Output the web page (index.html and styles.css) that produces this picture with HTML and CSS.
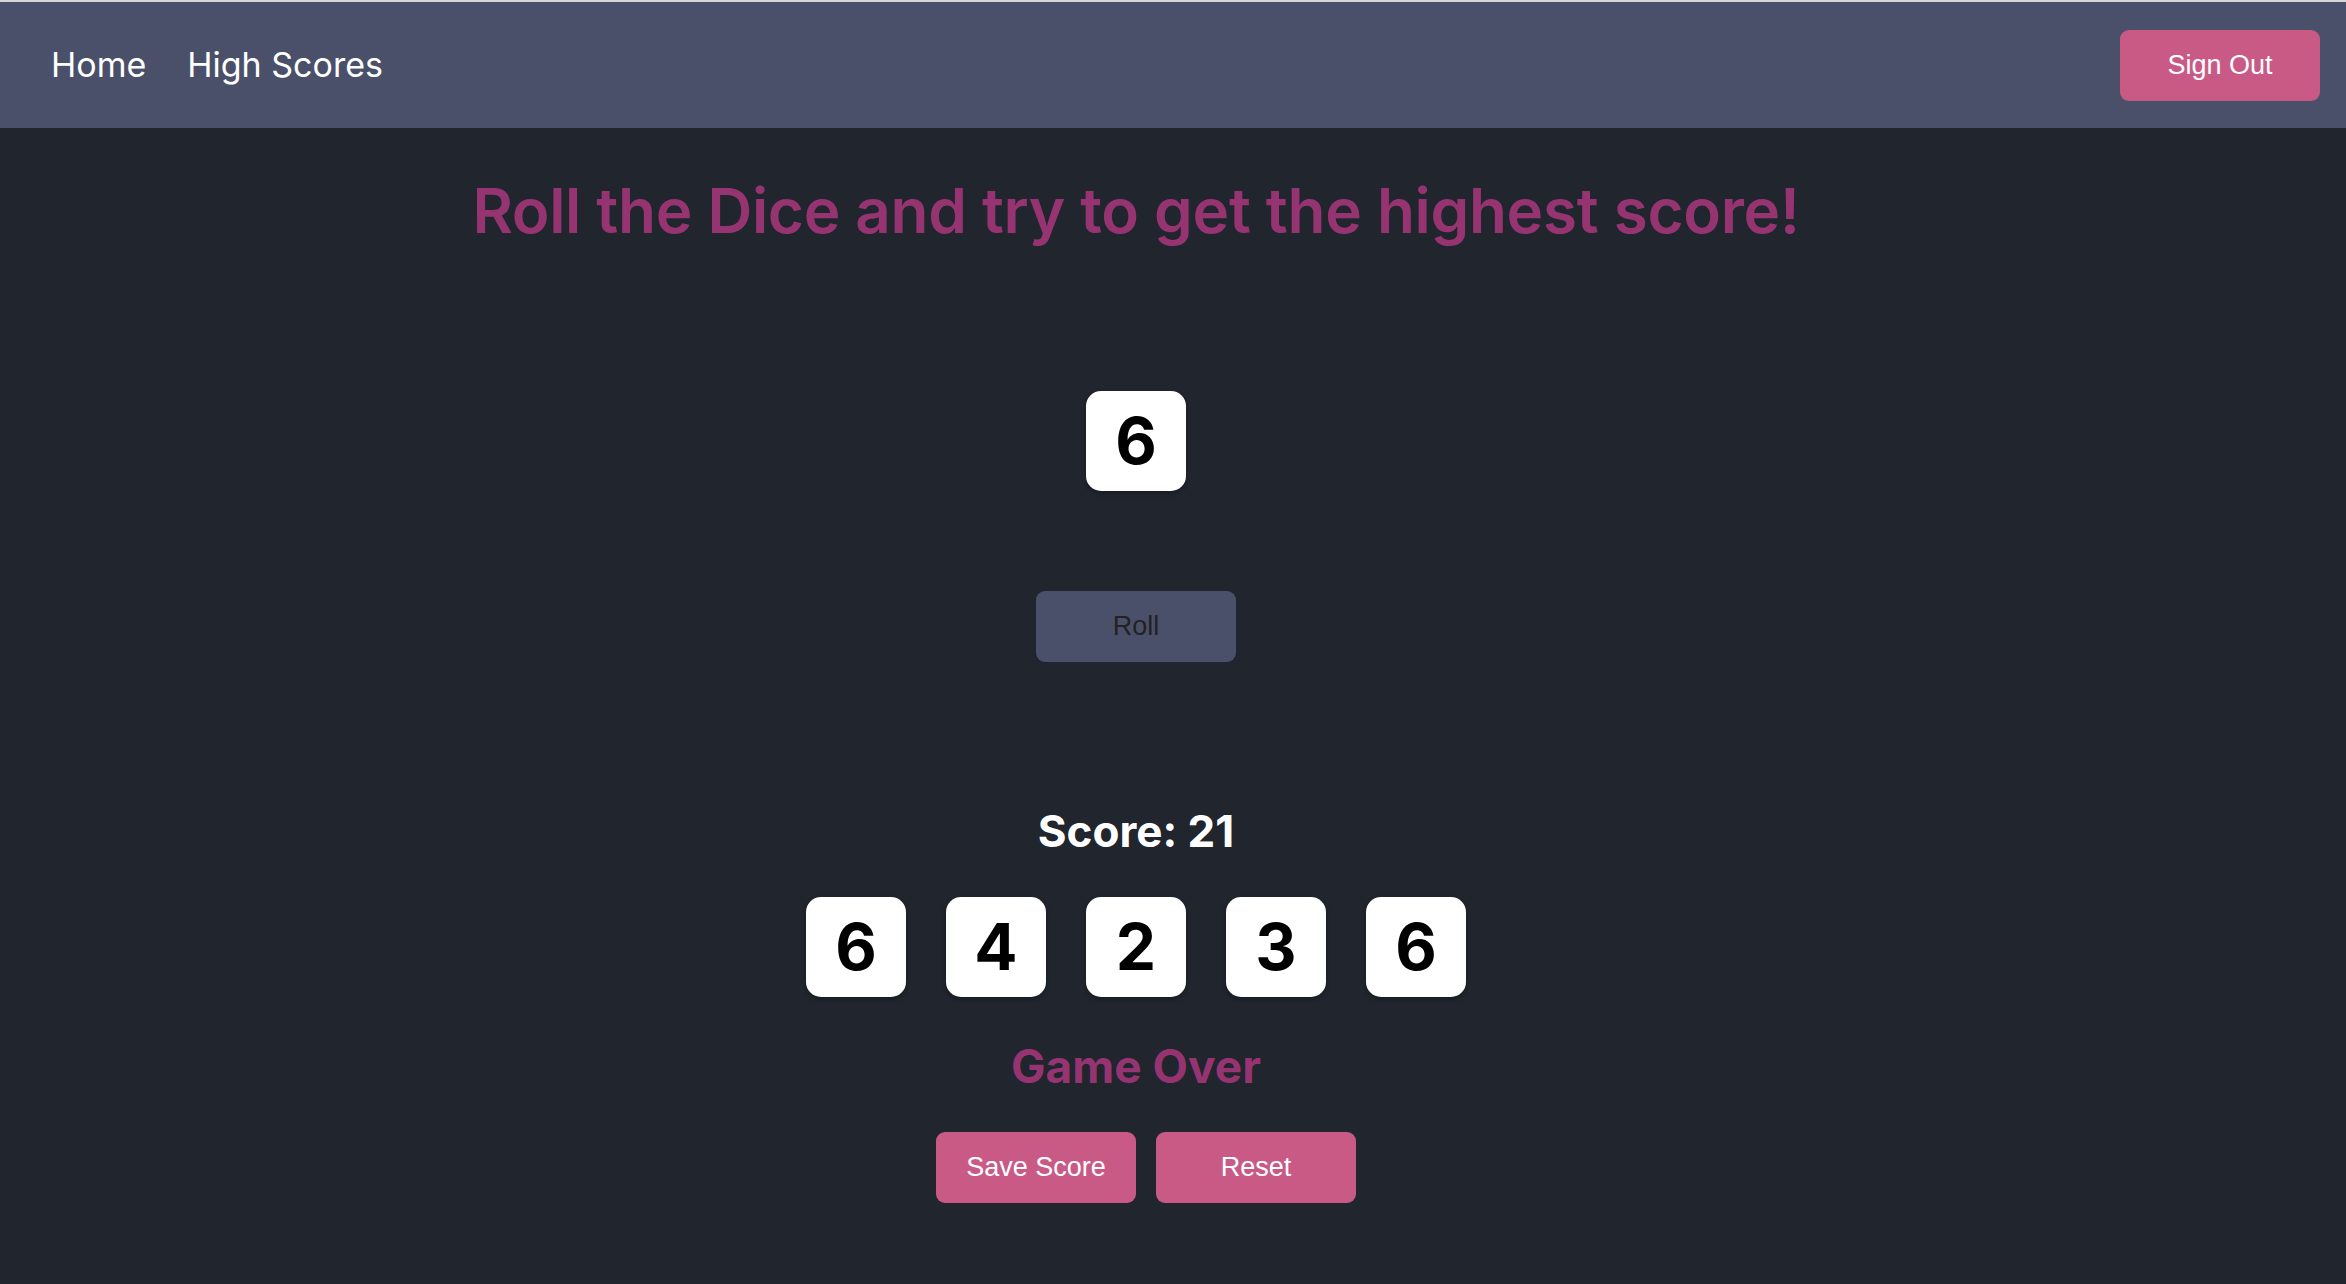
FILE: index.html
```html
<!DOCTYPE html>
<html lang="en">
<head>
<meta charset="utf-8">
<title>Dice Game</title>
<link rel="stylesheet" href="styles.css">
</head>
<body>
<header class="topbar">
  <nav class="nav-links">
    <a class="nav-link" href="#">Home</a>
    <a class="nav-link" href="#">High Scores</a>
  </nav>
  <button class="btn btn-pink">Sign Out</button>
</header>
<main class="game">
  <h1 class="title">Roll the Dice and try to get the highest score!</h1>
  <div class="die die-current">6</div>
  <button class="btn btn-roll">Roll</button>
  <h2 class="score">Score: 21</h2>
  <div class="dice-row">
    <div class="die">6</div>
    <div class="die">4</div>
    <div class="die">2</div>
    <div class="die">3</div>
    <div class="die">6</div>
  </div>
  <h2 class="game-over">Game Over</h2>
  <div class="actions">
    <button class="btn btn-pink btn-action">Save Score</button>
    <button class="btn btn-pink btn-action">Reset</button>
  </div>
</main>
</body>
</html>
```

FILE: styles.css
```css
html, body {
  margin: 0;
  padding: 0;
}
body {
  background: #20252e;
  font-family: Inter, "Noto Sans", sans-serif;
  min-height: 1284px;
}
.topbar {
  box-sizing: border-box;
  height: 128px;
  border-top: 2px solid #d6d6da;
  background: #4a5069;
  display: flex;
  align-items: center;
  justify-content: space-between;
  padding: 0 26px 0 51px;
}
.nav-links {
  display: flex;
  gap: 41px;
}
.nav-link {
  color: #ffffff;
  text-decoration: none;
  font-size: 34px;
  font-weight: 400;
  line-height: 1;
}
.btn {
  width: 200px;
  height: 71px;
  border: none;
  border-radius: 9px;
  font-family: "Liberation Sans", Arial, sans-serif;
  font-size: 27px;
  padding: 0;
  cursor: pointer;
}
.btn-pink {
  background: #c95a86;
  color: #ffffff;
}
.btn-roll {
  background: #4a5069;
  color: #222222;
  margin-top: 100px;
}
.game {
  display: flex;
  flex-direction: column;
  align-items: center;
  padding-right: 74px;
}
.title {
  margin: 52px 0 0;
  font-size: 62px;
  line-height: 1;
  font-weight: 600;
  color: #963472;
  letter-spacing: -0.3px;
}
.die {
  width: 100px;
  height: 100px;
  background: #ffffff;
  border-radius: 15px;
  display: flex;
  align-items: center;
  justify-content: center;
  font-size: 64px;
  font-weight: 700;
  color: #000000;
  box-shadow: 0 2px 4px rgba(0, 0, 0, 0.3);
  line-height: 1;
}
.die-current {
  margin-top: 149px;
}
.score {
  margin: 147px 0 0;
  font-size: 44px;
  line-height: 1;
  font-weight: 700;
  color: #ffffff;
}
.dice-row {
  display: flex;
  gap: 40px;
  margin-top: 44px;
}
.game-over {
  margin: 46px 0 0;
  font-size: 46px;
  line-height: 1;
  font-weight: 700;
  color: #963472;
}
.actions {
  display: flex;
  margin-top: 43px;
}
.btn-action {
  margin-left: 20px;
}
```
